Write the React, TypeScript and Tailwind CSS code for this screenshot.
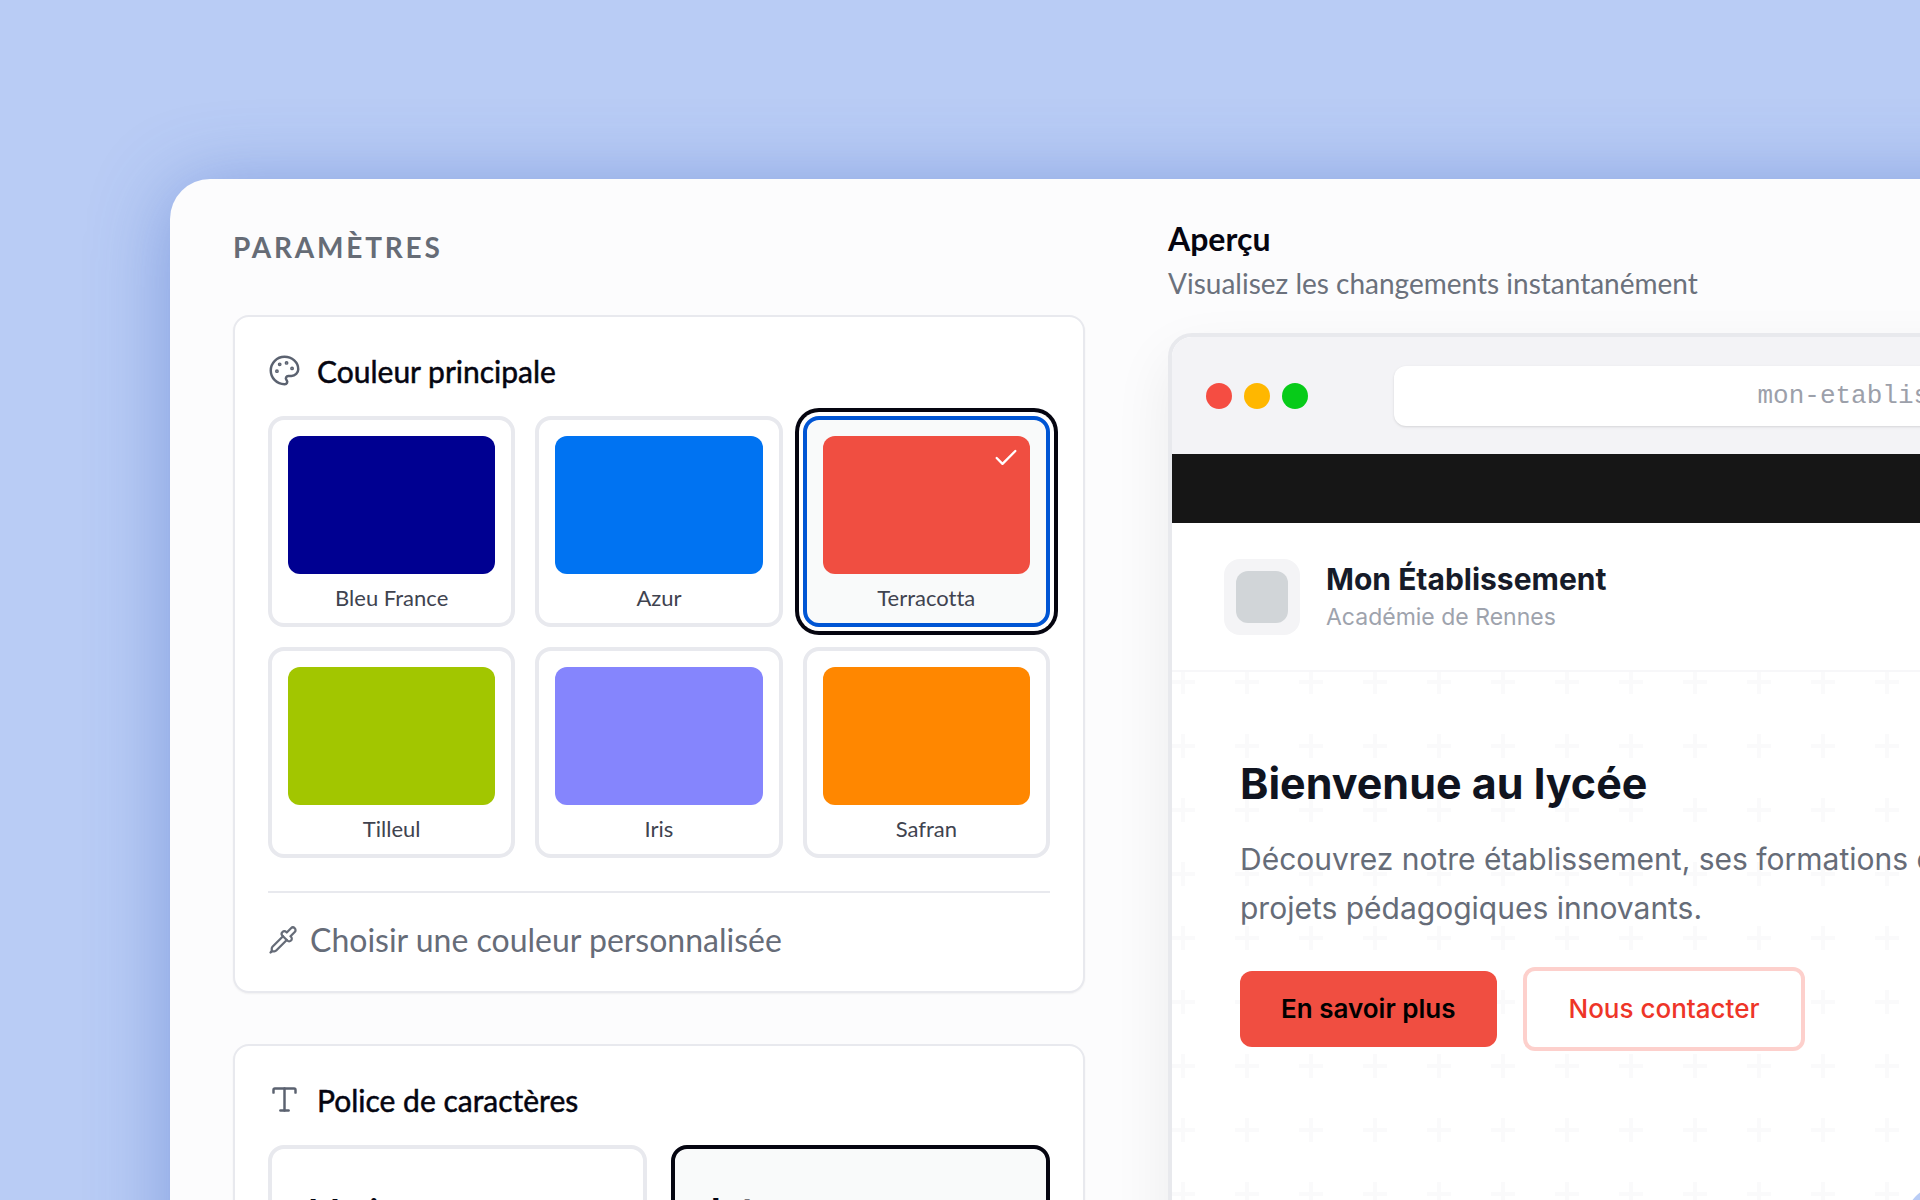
import { useState } from 'react'
import type { ReactNode } from 'react'
import { Check, Palette, Pipette, Type } from 'lucide-react'
import clsx from 'clsx'

const COLORS = [
  { name: 'Bleu France', bg: 'bg-[#000091]' },
  { name: 'Azur', bg: 'bg-[#0073f2]' },
  { name: 'Terracotta', bg: 'bg-[#f04e41]' },
  { name: 'Tilleul', bg: 'bg-[#a2c600]' },
  { name: 'Iris', bg: 'bg-[#8585fd]' },
  { name: 'Safran', bg: 'bg-[#ff8700]' },
]

const FONTS = [
  { name: 'Marianne', className: 'font-[Lato,sans-serif]' },
  { name: 'Inter', className: 'font-[Inter,sans-serif]' },
]

function Card({ icon, title, children }: { icon: ReactNode; title: string; children: ReactNode }) {
  return (
    <section className="rounded-2xl border-2 border-[#e8e9ee] bg-white p-[33px] shadow-xs">
      <div className="mb-[26px] flex h-10 items-center gap-4 text-[#5b6270]">
        {icon}
        <h3 className="pt-0.5 text-[30px] leading-10 text-[#050510] [-webkit-text-stroke:0.5px_#050510]">{title}</h3>
      </div>
      {children}
    </section>
  )
}

function Settings() {
  const [color, setColor] = useState('Terracotta')
  const [font, setFont] = useState('Inter')

  return (
    <div className="w-[852px] shrink-0 pt-12">
      <h2 className="mb-12 text-[28px] leading-10 font-bold tracking-widest text-[#666c76] uppercase">Paramètres</h2>

      <div className="flex flex-col gap-[51px]">
        <Card icon={<Palette size={33} strokeWidth={1.8} />} title="Couleur principale">
          <div className="grid grid-cols-3 gap-5">
            {COLORS.map((c) => (
              <button
                key={c.name}
                type="button"
                aria-pressed={color === c.name}
                onClick={() => setColor(c.name)}
                className={clsx(
                  'rounded-2xl border-4 px-4 pt-4 pb-[11px]',
                  color === c.name
                    ? 'border-[#0055d4] bg-[#f9fafa] ring-4 ring-[#050510] ring-offset-4'
                    : 'border-[#e8e9ee] bg-white',
                )}
              >
                <span className={clsx('flex h-[138px] justify-end rounded-xl px-2.5 py-2', c.bg)}>
                  {color === c.name && <Check size={28} strokeWidth={2} className="text-white" />}
                </span>
                <span className="mt-2.5 block text-[22px] leading-7 text-[#40434f]">{c.name}</span>
              </button>
            ))}
          </div>

          <div className="mt-[33px] border-t-2 border-[#e8e9ee] pt-[29px]">
            <button type="button" className="flex items-center gap-3 text-[32px] leading-9 text-[#666c78]">
              <Pipette size={30} strokeWidth={1.8} />
              Choisir une couleur personnalisée
            </button>
          </div>
        </Card>

        <Card icon={<Type size={33} strokeWidth={1.8} />} title="Police de caractères">
          <div className="grid grid-cols-2 gap-6">
            {FONTS.map((f) => (
              <button
                key={f.name}
                type="button"
                aria-pressed={font === f.name}
                onClick={() => setFont(f.name)}
                className={clsx(
                  'rounded-2xl border-4 px-9 py-[38px] text-left text-[34px] leading-12 font-bold text-[#050510]',
                  f.className,
                  font === f.name ? 'border-[#050510] bg-[#f9fafa]' : 'border-[#e8e9ee] bg-white',
                )}
              >
                {f.name}
              </button>
            ))}
          </div>
        </Card>
      </div>
    </div>
  )
}

function PlusPattern() {
  return (
    <svg aria-hidden="true" className="absolute inset-0 h-full w-full">
      <defs>
        <pattern id="plus" width="64" height="64" x="-21" y="-22" patternUnits="userSpaceOnUse">
          <path d="M30 20h4v10h10v4H34v10h-4V34H20v-4h10z" fill="#fafafb" />
        </pattern>
      </defs>
      <rect width="100%" height="100%" fill="url(#plus)" />
    </svg>
  )
}

function Preview() {
  return (
    <div className="w-[1303px] shrink-0 pt-9">
      <h2 className="text-[32px] leading-[48px] font-bold text-[#050510]">Aperçu</h2>
      <p className="mb-[30px] text-[28px] leading-10 text-[#6b717c]">Visualisez les changements instantanément</p>

      <div className="overflow-hidden rounded-3xl border-4 border-[#e8e9ed] bg-white font-[Inter,sans-serif] shadow-[0_24px_60px_rgba(0,0,0,0.07)]">
        <div className="flex h-[117px] items-center bg-[#f3f3f6] px-[34px]">
          <div className="mr-[86px] flex gap-3">
            <span className="size-[26px] rounded-full bg-[#f54d42]" />
            <span className="size-[26px] rounded-full bg-[#ffb700]" />
            <span className="size-[26px] rounded-full bg-[#07cb19]" />
          </div>
          <input
            type="text"
            readOnly
            aria-label="Adresse du site"
            value="mon-etablissement.fr"
            className="h-[60px] min-w-0 flex-1 rounded-xl bg-white text-center font-['Liberation_Mono',monospace] text-[26px] text-[#9ca0aa] shadow-sm outline-none"
          />
        </div>
        <div className="h-[69px] bg-[#161616]" />

        <header className="flex items-center gap-[26px] border-b-2 border-[#f7f7f9] px-[52px] pt-9 pb-[35px]">
          <div className="rounded-2xl bg-[#f4f4f6] p-3">
            <div className="size-[52px] rounded-xl bg-[#d1d5d8]" />
          </div>
          <div>
            <p className="text-[30px] leading-10 font-bold text-[#161b29]">Mon Établissement</p>
            <p className="text-[23px] leading-9 text-[#9ea3ad]">Académie de Rennes</p>
          </div>
        </header>

        <div className="relative">
          <PlusPattern />
          <div className="relative px-[68px] pt-[83px] pb-60">
            <h1 className="mb-6 text-[43px] leading-[56px] font-bold text-[#10141f]">Bienvenue au lycée</h1>
            <p className="mb-[34px] max-w-[800px] text-[30px] leading-[49px] text-[#666c78]">
              Découvrez notre établissement, ses formations et ses projets pédagogiques innovants.
            </p>
            <div className="flex items-center gap-[26px] text-[26px] leading-9">
              <button type="button" className="rounded-xl bg-[#f04e41] px-[41px] py-5 font-semibold text-black">
                En savoir plus
              </button>
              <button type="button" className="rounded-xl border-4 border-[#fdd0cc] bg-white px-[42px] py-5 font-medium text-[#ee3528]">
                Nous contacter
              </button>
            </div>
          </div>
        </div>
      </div>
    </div>
  )
}

export default function App() {
  return (
    <div className="relative h-screen overflow-hidden bg-[#b9ccf5] pt-[179px] pl-[170px] font-[Lato,sans-serif] [font-variant-ligatures:none]">
      <main className="flex min-h-full w-max gap-[83px] rounded-[40px] bg-[#fcfcfd] px-[63px] pb-16 shadow-[0_8px_80px_rgba(50,90,190,0.42)]">
        <Settings />
        <Preview />
      </main>
      {/* floating bubble peeking out of the corner */}
      <div className="absolute -right-[54px] -bottom-[54px] size-[68px] rounded-full bg-[#b9ccf5]" />
    </div>
  )
}
